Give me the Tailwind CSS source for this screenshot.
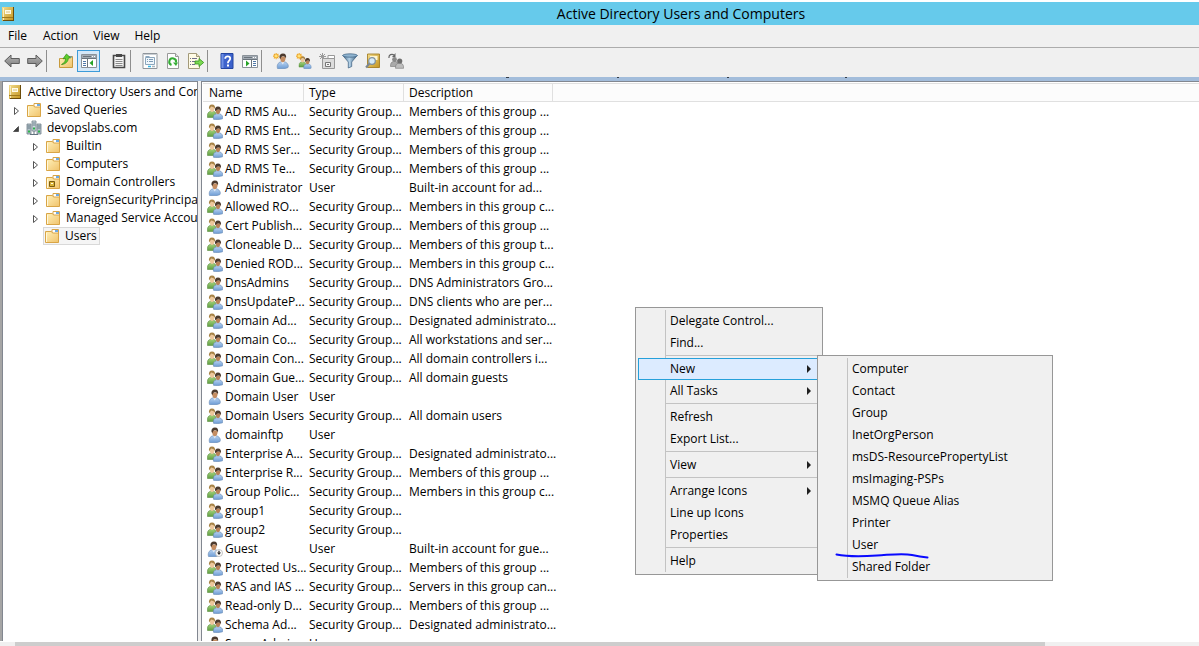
<!DOCTYPE html>
<html lang="en">
<head>
<meta charset="utf-8">
<title>Active Directory Users and Computers</title>
<script src="https://cdn.jsdelivr.net/npm/@tailwindcss/browser@4"></script>
</head>
<body class="font-['Open_Sans','Noto_Sans',sans-serif] text-xs text-black bg-white">

<svg class="absolute size-0" aria-hidden="true">
  <defs>
    <linearGradient id="g-gold" x1="0" y1="0" x2="1" y2="1"><stop offset="0" stop-color="#f3dc8c"/><stop offset="1" stop-color="#c4951f"/></linearGradient>
    <linearGradient id="g-folder" x1="0" y1="0" x2="1" y2="1"><stop offset="0" stop-color="#fff0b8"/><stop offset="1" stop-color="#f0c36c"/></linearGradient>
    <linearGradient id="g-blue" x1="0" y1="0" x2="0" y2="1"><stop offset="0" stop-color="#b9d3f0"/><stop offset="1" stop-color="#6c9bd4"/></linearGradient>
    <linearGradient id="g-green" x1="0" y1="0" x2="0" y2="1"><stop offset="0" stop-color="#a3d27c"/><stop offset="1" stop-color="#5f9e41"/></linearGradient>
    <linearGradient id="g-arrow" x1="0" y1="0" x2="0" y2="1"><stop offset="0" stop-color="#b4b4b4"/><stop offset="1" stop-color="#7c7c7c"/></linearGradient>
    <linearGradient id="g-funnel" x1="0" y1="0" x2="1" y2="0"><stop offset="0" stop-color="#3f6585"/><stop offset=".45" stop-color="#b4d2e8"/><stop offset="1" stop-color="#3b5d7c"/></linearGradient>
  </defs>
  <symbol id="i-book" viewBox="0 0 16 16">
    <path d="M2 1h11v14H2z" fill="url(#g-gold)"/><path d="M13 1h1v14H3v-1h10z" fill="#6b4c0a"/>
    <path d="M3 2h1v12H3z" fill="#f8ecbc"/><path d="M5 4h6v4H5z" fill="#fffbe8"/><path d="M6 6h4" stroke="#d9c07a"/><path d="M2 11.500h11" stroke="#a17a1c"/>
  </symbol>
  <symbol id="i-folder" viewBox="0 0 16 16">
    <path d="M8 1.500h6.500v5H8z" fill="#fff" stroke="#d9a546"/><path d="M11 3h3" stroke="#3d8fdd" stroke-width="1.500"/>
    <path d="M1.500 3.500h6l1 1.500h6v9.500h-13z" fill="url(#g-folder)" stroke="#d9a546"/><path d="M2.500 14V5" stroke="#fff8dc"/>
  </symbol>
  <symbol id="i-dcfolder" viewBox="0 0 16 16">
    <use href="#i-folder"/><path d="M4.500 7.500h5v5h-5z" fill="#d9b338" stroke="#7b5c10"/><path d="M6 9h2v1H6z" fill="#fffbe8"/>
  </symbol>
  <symbol id="i-domain" viewBox="0 0 16 16">
    <path d="M1 4h4v10H1z" fill="#b4c2ca" stroke="#72818b" stroke-width=".8"/>
    <path d="M11 4h4v10h-4z" fill="#b4c2ca" stroke="#72818b" stroke-width=".8"/>
    <path d="M6 1h4v10H6z" fill="#cfdae0" stroke="#72818b" stroke-width=".8"/>
    <path d="M1.500 6h3M11.500 6h3M6.500 3h3M6.500 5h3M1.500 8h3M11.500 8h3" stroke="#5f7480" stroke-width=".9"/>
    <path d="M7 7.500h2v2H7zM2 10.500h2v2H2zM12 10.500h2v2h-2z" fill="#2cb34a"/>
    <path d="M8 11v4M4 14.500h8" stroke="#62737e"/>
  </symbol>
  <symbol id="i-user" viewBox="0 0 16 16">
    <path d="M2.500 15.500c-.8-3 .2-6 3.500-6.700h3.500c3 .7 4.500 3.700 3.500 5.700-2 1.500-8 1.500-10.500 1z" fill="url(#g-blue)" stroke="#6488b4" stroke-width=".6"/>
    <path d="M6 8.500l1.800 3 1.700-3z" fill="#e6eef8"/>
    <path d="M5 3.500c0 3.500 1 5.800 2.800 5.800S10.700 7 10.700 3.500z" fill="#c48d62"/>
    <path d="M4.500 5C4 2 5.500.5 8 .5s3.600 1.700 3 4.800c-.8-1.600-1.600-2-3-2-1 0-2 .2-2.400 2.800z" fill="#4c3a2d"/>
  </symbol>
  <symbol id="i-group" viewBox="0 0 16 16">
    <path d="M.5 13.500C0 10 1 7.800 3.500 7.300h3.200C9 8 9.500 10 9 13.500z" fill="url(#g-green)" stroke="#5d8f43" stroke-width=".6"/>
    <path d="M2.700 3c0 3 .8 5 2.300 5s2.600-2 2.600-5z" fill="#edc79b"/>
    <path d="M2 5.500C1.500 2 2.700.4 5 .4s3.500 1.500 3 4.600C7 3 5 2.400 3.600 3.200z" fill="#a88346"/>
    <path d="M6.500 15.300c-.6-3 .5-5 3-5.500h3c2.500.5 3.700 3 3 5-2 .9-7 .9-9 .5z" fill="url(#g-blue)" stroke="#6488b4" stroke-width=".6"/>
    <path d="M8.600 5.500c0 2.800.8 4.700 2.400 4.700s2.500-2 2.500-4.700z" fill="#b98157"/>
    <path d="M8 7.200C7.600 4 8.700 2.500 11 2.500s3.400 1.600 2.900 4.600c-1-2-3-2.400-5.900.1z" fill="#4c3a2d"/>
  </symbol>
  <symbol id="i-disabled" viewBox="0 0 16 16">
    <use href="#i-user" x="-1"/><circle cx="12" cy="12" r="3.500" fill="#fff" stroke="#aaa" stroke-width=".7"/>
    <path d="M12 9.800v2" stroke="#222" stroke-width="1.300"/><path d="M10 11.600h4l-2 2.400z" fill="#222"/>
  </symbol>
  <symbol id="i-spark" viewBox="0 0 16 16">
    <path d="M3.500 0v7M0 3.500h7M1 1l5 5M6 1L1 6" stroke="#f0a51e" stroke-width="1.200"/><circle cx="3.500" cy="3.500" r="1.500" fill="#ffe27a"/>
  </symbol>
</svg>

<div class="flex flex-col h-screen overflow-hidden relative">
  <header class="mt-[2px] h-[23px] shrink-0 bg-[#66caeb] flex items-center">
    <svg class="size-4 shrink-0"><use href="#i-book"/></svg>
    <h1 class="flex-1 pl-[147px] text-center text-sm leading-5">Active Directory Users and Computers</h1>
  </header>

  <nav class="h-[22px] shrink-0 bg-[#f0f0f0] flex items-center" aria-label="Menu bar">
    <button class="px-2">File</button>
    <button class="px-2">Action</button>
    <button class="px-[7px]">View</button>
    <button class="px-2">Help</button>
  </nav>

  <div class="h-[30px] shrink-0 bg-[#f0f0f0] border-t border-[#acacac] pb-1 flex items-center" role="toolbar" aria-label="Tools">
    <button class="w-[23px] h-[22px] flex items-center justify-center" aria-label="Back"><svg class="size-4" viewBox="0 0 16 16"><path d="M.7 8L7 2v3.500h8.300v5H7V14z" fill="url(#g-arrow)" stroke="#5c5c5c"/></svg></button>
    <button class="w-[23px] h-[22px] flex items-center justify-center" aria-label="Forward"><svg class="size-4" viewBox="0 0 16 16"><path d="M15.300 8L9 2v3.500H.7v5H9V14z" fill="url(#g-arrow)" stroke="#5c5c5c"/></svg></button>
    <span class="w-px h-[22px] bg-[#8e8e8e] mr-[7px]"></span>
    <button class="w-[23px] h-[22px] flex items-center justify-center" aria-label="Up one level"><svg class="size-4" viewBox="0 0 16 16"><path d="M1.500 5.500h5l1.500-2h6.500v11h-13z" fill="url(#g-folder)" stroke="#c79a3c"/><path d="M11 4h3" stroke="#3d8fdd"/><path d="M3.500 11.500C6.500 10 7.500 8 7.500 5.500L5 5.800 8.500 1l4 3.800-2.200.4c0 3-2.500 6-6.800 6.300z" fill="#5fcf2c" stroke="#2d8a13" stroke-width=".7"/></svg></button>
    <button class="w-[23px] h-[22px] flex items-center justify-center border border-[#3c9bd9] bg-[#d5e8f8]" aria-label="Show or hide console tree" aria-pressed="true"><svg class="size-4 shrink-0" viewBox="0 0 16 16"><path d="M.5 1.500h15v13H.5z" fill="#fff" stroke="#8b9299"/><path d="M1 2h14v3H1z" fill="#a3abb3"/><path d="M2 3.500h8M1 5.500h14M6.500 6v8" stroke="#6b747c"/><path d="M11 3h1v1h-1zM13 3h1v1h-1z" fill="#fff"/><path d="M2 8.500h3M2 10.500h3M2 12.500h3" stroke="#5079a8"/><path d="M12 7v6L8.500 10z" fill="#27a327"/></svg></button>
    <button class="ml-[7px] w-[23px] h-[22px] flex items-center justify-center" aria-label="Paste"><svg class="size-4" viewBox="0 0 16 16"><path d="M2.500 2.500h11v12h-11z" fill="#f4f4f4" stroke="#484848" stroke-width="1.600"/><path d="M5 1h6v3H5z" fill="#484848"/><path d="M4.500 6.500h7M4.500 8.500h7M4.500 10.500h7M4.500 12.500h7" stroke="#8a8a8a"/></svg></button>
    <span class="w-px h-[22px] bg-[#8e8e8e] mr-[7px]"></span>
    <button class="w-[23px] h-[22px] flex items-center justify-center" aria-label="Properties"><svg class="size-4" viewBox="0 0 16 16"><path d="M1 .5h14v15H1z" fill="#fff" stroke="#8f959b"/><path d="M1.500 1.500h13" stroke="#c9ced3"/><path d="M3.500 4.500h9v7h-9z" fill="#f0f7fc" stroke="#8ba6bd"/><path d="M3.500 3.500h4" stroke="#8ba6bd"/><path d="M5 6.500h1M7 6.500h4M5 8.500h1M7 8.500h4" stroke="#7c9ab5"/><path d="M6 13.500h3" stroke="#31b5e6" stroke-width="1.500"/><path d="M10 13.500h3" stroke="#a9b4bd" stroke-width="1.500"/></svg></button>
    <button class="w-[23px] h-[22px] flex items-center justify-center" aria-label="Refresh"><svg class="size-4" viewBox="0 0 16 16"><path d="M2.500.5h8l3 3v12h-11z" fill="#fdfdfd" stroke="#999"/><path d="M10.500.5v3h3" fill="#e4e4e4" stroke="#999"/><path d="M6.500 12A3.400 3.400 0 1 1 11 9.500" fill="none" stroke="#35ad35" stroke-width="2"/><path d="M8 9.500h5l-2 3.500z" fill="#35ad35"/></svg></button>
    <button class="w-[23px] h-[22px] flex items-center justify-center" aria-label="Export list"><svg class="size-4" viewBox="0 0 16 16"><path d="M.5.500h8l3 3v12H.5z" fill="#fffbe6" stroke="#a39a7a"/><path d="M8.500.5v3h3" fill="#e9e2c4" stroke="#a39a7a"/><path d="M2 5.500h1M4 5.500h5M2 8.500h1M4 8.500h3M2 11.500h1M4 11.500h3" stroke="#6f6f8c"/><path d="M7 8h4V5.500l4.700 4L11 13.500V11H7z" fill="#7bd851" stroke="#35941c" stroke-width=".8"/></svg></button>
    <span class="w-px h-[22px] bg-[#8e8e8e] mr-[7px]"></span>
    <button class="w-[23px] h-[22px] flex items-center justify-center" aria-label="Help"><svg class="size-4" viewBox="0 0 16 16"><path d="M2 .5h12v15H2z" fill="#3c62cc" stroke="#2345a0"/><path d="M2.500 1h2v14h-2z" fill="#6f90e4"/><path d="M6.200 5.800c0-3.200 5-3 5-.2 0 2.200-2.300 2-2.300 4.600" fill="none" stroke="#fff" stroke-width="1.800"/><path d="M8 11.500h2v2H8z" fill="#fff"/></svg></button>
    <button class="w-[23px] h-[22px] flex items-center justify-center" aria-label="Show or hide action pane"><svg class="size-4" viewBox="0 0 16 16"><path d="M.5 2.500h15v12H.5z" fill="#fff" stroke="#8b9299"/><path d="M1 3h14v3H1z" fill="#a3abb3"/><path d="M2 4.500h8M1 6.500h14M9.500 7v7" stroke="#6b747c"/><path d="M11 4h1v1h-1zM13 4h1v1h-1z" fill="#fff"/><path d="M11 8.500h3M11 10.500h3M11 12.500h3" stroke="#5079a8"/><path d="M4 7.500v6l3.500-3z" fill="#27a327"/></svg></button>
    <span class="w-px h-[22px] bg-[#8e8e8e] mr-[7px]"></span>
    <button class="w-[23px] h-[22px] flex items-center justify-center" aria-label="New user"><svg class="size-4" viewBox="0 0 16 16"><use href="#i-user" x="2"/><g transform="scale(.9)"><use href="#i-spark"/></g></svg></button>
    <button class="w-[23px] h-[22px] flex items-center justify-center" aria-label="New group"><svg class="size-4" viewBox="0 0 16 16"><g transform="translate(2.500 3) scale(.82)"><use href="#i-group" width="16" height="16"/></g><g transform="scale(.9)"><use href="#i-spark"/></g></svg></button>
    <button class="w-[23px] h-[22px] flex items-center justify-center" aria-label="New organizational unit"><svg class="size-4" viewBox="0 0 16 16"><path d="M9 2.500h6.500V6H9z" fill="#fff" stroke="#999"/><path d="M3.500 5.500h12v10h-12z" fill="#dcdcdc" stroke="#989898"/><path d="M6.500 9.500h5v4h-5z" fill="#f4f4f4" stroke="#777"/><path d="M8 11.500h2" stroke="#777"/><path d="M3.500 0v7M0 3.500h7M1 1l5 5M6 1L1 6" stroke="#9a9a9a"/></svg></button>
    <button class="w-[23px] h-[22px] flex items-center justify-center" aria-label="Filter"><svg class="size-4" viewBox="0 0 16 16"><path d="M.8 2.500L6.300 9v6l3.400-1.500V9l5.500-6.500z" fill="url(#g-funnel)" stroke="#3b5f7f" stroke-width=".7"/><ellipse cx="8" cy="2.500" rx="7.300" ry="1.700" fill="#8fb4d0" stroke="#3b5f7f" stroke-width=".7"/></svg></button>
    <button class="w-[23px] h-[22px] flex items-center justify-center" aria-label="Find objects"><svg class="size-4" viewBox="0 0 16 16"><path d="M2.500 1h12v13.500h-12z" fill="url(#g-gold)" stroke="#9c7413" stroke-width=".8"/><path d="M5 3h7.500v4H5z" fill="#fff6d2"/><path d="M4.500 10.500L1 14.500" stroke="#7c8791" stroke-width="2"/><circle cx="7" cy="8" r="3.300" fill="#d6ebf7" stroke="#7f909e" stroke-width="1.200"/></svg></button>
    <button class="w-[23px] h-[22px] flex items-center justify-center" aria-label="Add to group"><svg class="size-4" viewBox="0 0 16 16"><path d="M2.500 13.500c0-3 .5-4.500 3-5H8c2 .5 2 3 2 5z" fill="#aaa" stroke="#777" stroke-width=".6"/><circle cx="6.500" cy="6.500" r="2.400" fill="#888"/><path d="M7.500 15.300c0-3 .6-4.600 2.800-5H13c2.300.5 2.700 3 2.600 5z" fill="#bdbdbd" stroke="#777" stroke-width=".6"/><circle cx="11.700" cy="8" r="2.600" fill="#6e6e6e"/><path d="M1 5C.5 1.500 4 .5 6 2" fill="none" stroke="#666" stroke-width="1.200"/><path d="M7.500 0v4H4z" fill="#666"/></svg></button>
  </div>

  <svg class="block h-1 w-full shrink-0 bg-[#a3bddb]" aria-hidden="true"><path d="M506 .5h3M617 .5h2M727 .5h2M845 .5h2" stroke="#333c48"/></svg>

  <main class="flex flex-1 min-h-0 bg-[#f0f0f0] border-l-2 border-[#a5a5a5]">
    <aside class="w-[196px] shrink-0 border-x border-t border-[#828790] bg-white overflow-hidden pt-px">
      <ul id="tree" class="whitespace-nowrap leading-[18px]"></ul>
    </aside>
    <section class="flex-1 min-w-0 ml-[3px] border-l border-t border-[#828790] bg-white overflow-hidden pl-px pt-px">
      <table class="table-fixed w-full whitespace-nowrap border-separate border-spacing-0">
        <colgroup><col class="w-[101px]"><col class="w-[100px]"><col class="w-[149px]"><col></colgroup>
        <thead>
          <tr class="h-[19px] bg-[#fcfcfc] text-left leading-4">
            <th class="p-0 pl-1.5 font-normal border-y border-r border-[#e0e0e0]">Name</th>
            <th class="p-0 pl-[5px] font-normal border-y border-r border-[#e0e0e0]">Type</th>
            <th class="p-0 pl-[5px] font-normal border-y border-r border-[#e0e0e0]">Description</th>
            <td class="p-0 border-y border-[#e0e0e0]"></td>
          </tr>
        </thead>
        <tbody id="rows"></tbody>
      </table>
    </section>
  </main>

  <div class="h-1 mt-px shrink-0 bg-[#f0f0f0] pl-[15px]"><div class="h-full w-[87%] bg-[#cdcdcd]"></div></div>

  <div class="absolute left-[635px] top-[307px] w-[188px] border border-[#979797] bg-[#f0f0f0] p-[2px] leading-[22px]">
    <span class="absolute left-[29px] inset-y-[2px] w-px bg-[#c3c3c3]"></span>
    <ul id="menu" class="relative" role="menu"></ul>
  </div>
</div>

<script>
const tree = [
  ['pl-1', '', 'i-book', 'Active Directory Users and Computers'],
  ['pl-[6px]', 'closed', 'i-folder', 'Saved Queries'],
  ['pl-[6px]', 'open', 'i-domain', 'devopslabs.com'],
  ['pl-[25px]', 'closed', 'i-folder', 'Builtin'],
  ['pl-[25px]', 'closed', 'i-folder', 'Computers'],
  ['pl-[25px]', 'closed', 'i-dcfolder', 'Domain Controllers'],
  ['pl-[25px]', 'closed', 'i-folder', 'ForeignSecurityPrincipals'],
  ['pl-[25px]', 'closed', 'i-folder', 'Managed Service Accounts'],
  ['pl-10', 'selected', 'i-folder', 'Users'],
];
const arrows = {
  closed: '<svg class="size-4 shrink-0 mr-px" viewBox="0 0 16 16"><path d="M5.500 5.500v7l4-3.500z" fill="#fff" stroke="#555"/></svg>',
  open: '<svg class="size-4 shrink-0 mr-px" viewBox="0 0 16 16"><path d="M9.500 6.500v5H4.500z" fill="#404040" stroke="#262626" stroke-width=".6"/></svg>',
};
document.getElementById('tree').innerHTML = tree.map(([pad, state, icon, text]) => {
  const pic = `<svg class="size-4 shrink-0"><use href="#${icon}"/></svg>`;
  if (state === 'selected') return `<li class="${pad} flex h-[18px]"><button class="flex items-center gap-[5px] border border-[#d9d9d9] bg-[#f5f5f5] pr-[2px]">${pic}<span>${text}</span></button></li>`;
  return `<li class="${pad} flex items-center h-[18px]">${arrows[state] || ''}${pic}<span class="ml-[5px]">${text}</span></li>`;
}).join('');

const G = 'Security Group...', M = 'Members of this group ...', N = 'Members in this group c...';
const rows = [
  ['g','AD RMS Au...',G,M],['g','AD RMS Ent...',G,M],['g','AD RMS Ser...',G,M],['g','AD RMS Te...',G,M],
  ['u','Administrator','User','Built-in account for ad...'],['g','Allowed RO...',G,N],['g','Cert Publish...',G,M],
  ['g','Cloneable D...',G,'Members of this group t...'],['g','Denied ROD...',G,N],['g','DnsAdmins',G,'DNS Administrators Gro...'],
  ['g','DnsUpdateP...',G,'DNS clients who are per...'],['g','Domain Ad...',G,'Designated administrato...'],
  ['g','Domain Co...',G,'All workstations and ser...'],['g','Domain Con...',G,'All domain controllers i...'],
  ['g','Domain Gue...',G,'All domain guests'],['u','Domain User','User',''],['g','Domain Users',G,'All domain users'],
  ['u','domainftp','User',''],['g','Enterprise A...',G,'Designated administrato...'],['g','Enterprise R...',G,M],
  ['g','Group Polic...',G,N],['g','group1',G,''],['g','group2',G,''],['d','Guest','User','Built-in account for gue...'],
  ['g','Protected Us...',G,M],['g','RAS and IAS ...',G,'Servers in this group can...'],['g','Read-only D...',G,M],
  ['g','Schema Ad...',G,'Designated administrato...'],['u','Super Admin','User',''],
];
const icons = { g: 'i-group', u: 'i-user', d: 'i-disabled' };
document.getElementById('rows').innerHTML = rows.map(([k, name, type, desc]) =>
  `<tr class="h-[19px] leading-[19px]"><td class="p-0 pl-1"><span class="flex items-center gap-[2px]"><svg class="size-4 shrink-0"><use href="#${icons[k]}"/></svg>${name}</span></td><td class="p-0 pl-[5px]">${type}</td><td class="p-0 pl-[5px]">${desc}</td><td class="p-0"></td></tr>`).join('');

const sub = ['Computer','Contact','Group','InetOrgPerson','msDS-ResourcePropertyList','msImaging-PSPs','MSMQ Queue Alias','Printer','User','Shared Folder'];
const submenu = `<div class="absolute left-[178px] -top-1 w-[236px] border border-[#979797] bg-[#f0f0f0] p-[2px]">
  <span class="absolute left-[29px] inset-y-[2px] w-px bg-[#c3c3c3]"></span>
  <ul class="relative" role="menu">${sub.map(t => `<li><button class="block w-full text-left pl-8" role="menuitem">${t}</button></li>`).join('')}</ul>
  <svg class="absolute left-[17px] top-[195px] w-24 h-3" viewBox="0 0 96 12" aria-hidden="true"><path d="M1.500 3.500C14 6 28 5.500 42 4.500 58 3.500 68 2 77 4c5 1.200 9 2 15.500 2.500" fill="none" stroke="#0a0aff" stroke-width="2" stroke-linecap="round"/></svg>
</div>`;
const arrow = '<svg class="w-2 h-2" viewBox="0 0 8 8"><path d="M2 0l4 4-4 4z" fill="#1f1f1f"/></svg>';
const menu = ['Delegate Control...','Find...','-','New>','All Tasks>','-','Refresh','Export List...','-','View>','-','Arrange Icons>','Line up Icons','Properties','-','Help'];
document.getElementById('menu').innerHTML = menu.map(t => {
  if (t === '-') return '<li class="h-1 pt-px pl-[27px] pr-[3px]" role="separator"><div class="h-px bg-[#c3c3c3]"></div></li>';
  const more = t.endsWith('>'), label = t.replace('>', '');
  if (label === 'New') return `<li class="relative z-10 border border-[#26a0da] bg-[#dcebff] h-[22px] leading-5"><button class="flex w-full items-center justify-between pl-[31px] pr-[6px] text-left" role="menuitem" aria-haspopup="true">${label}${arrow}</button><div class="leading-[22px]">${submenu}</div></li>`;
  return `<li><button class="flex w-full items-center justify-between pl-8 pr-[7px] text-left" role="menuitem">${label}${more ? arrow : ''}</button></li>`;
}).join('');
</script>
</body>
</html>
